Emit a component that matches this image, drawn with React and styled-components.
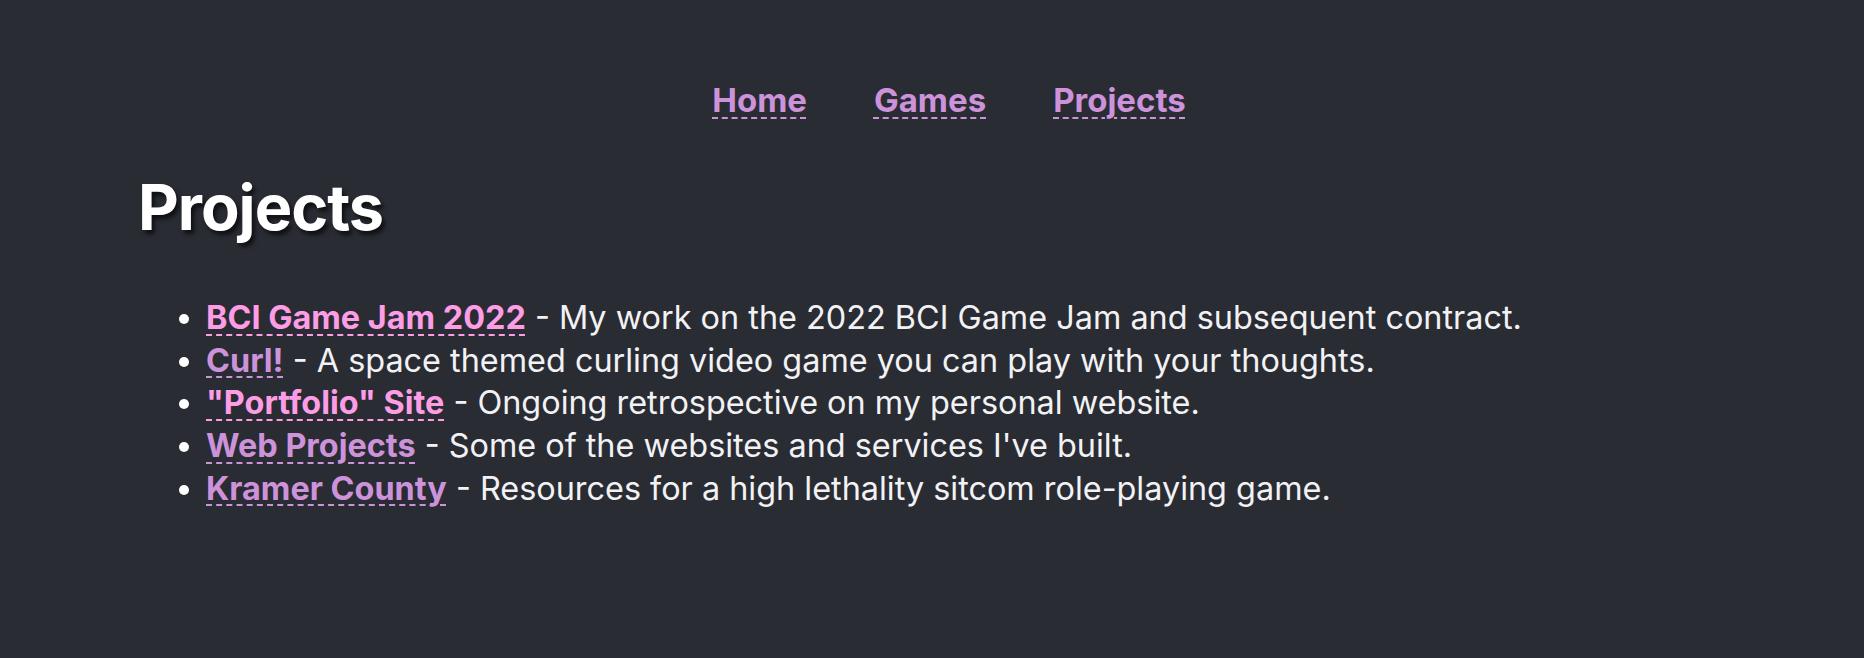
import styled, { createGlobalStyle } from "styled-components";

const GlobalStyle = createGlobalStyle`
  html, body {
    margin: 0;
    padding: 0;
    background: #2a2c34;
  }
  body {
    font-family: "Inter", "Noto Sans", sans-serif;
    color: #f2f2f4;
  }
`;

const colors = {
  pink: "#fd9de6",
  purple: "#cd93da",
};

const Page = styled.div`
  min-height: 658px;
  padding: 80px 138px 0;
  box-sizing: border-box;
`;

const Nav = styled.nav`
  display: flex;
  justify-content: center;
  gap: 67px;
  padding-left: 34px;
`;

const NavLink = styled.a`
  font-size: 33px;
  font-weight: 700;
  line-height: 40px;
  color: ${colors.purple};
  text-decoration: underline dashed;
  text-decoration-thickness: 2px;
  text-underline-offset: 5px;
`;

const Title = styled.h1`
  margin: 47px 0 0;
  font-size: 63px;
  font-weight: 700;
  line-height: 80px;
  letter-spacing: -1px;
  color: #ffffff;
  text-shadow: 3px 4px 4px rgba(0, 0, 0, 0.65);
`;

const List = styled.ul`
  margin: 50px 0 0;
  padding-left: 68px;
  list-style: disc;
`;

const Item = styled.li`
  font-size: 32.4px;
  line-height: 42.7px;
  &::marker {
    color: #ffffff;
  }
`;

const ItemLink = styled.a`
  font-weight: 700;
  color: ${(p) => (p.$pink ? colors.pink : colors.purple)};
  text-decoration: underline dashed;
  text-decoration-thickness: 2px;
  text-underline-offset: 5px;
`;

const projects = [
  { name: "BCI Game Jam 2022", text: "My work on the 2022 BCI Game Jam and subsequent contract.", pink: true },
  { name: "Curl!", text: "A space themed curling video game you can play with your thoughts." },
  { name: "\"Portfolio\" Site", text: "Ongoing retrospective on my personal website.", pink: true },
  { name: "Web Projects", text: "Some of the websites and services I've built." },
  { name: "Kramer County", text: "Resources for a high lethality sitcom role-playing game." },
];

export default function App() {
  return (
    <>
      <GlobalStyle />
      <Page>
        <Nav>
          <NavLink href="#">Home</NavLink>
          <NavLink href="#">Games</NavLink>
          <NavLink href="#">Projects</NavLink>
        </Nav>
        <Title>Projects</Title>
        <List>
          {projects.map((p) => (
            <Item key={p.name}>
              <ItemLink href="#" $pink={p.pink}>
                {p.name}
              </ItemLink>{" "}
              - {p.text}
            </Item>
          ))}
        </List>
      </Page>
    </>
  );
}
